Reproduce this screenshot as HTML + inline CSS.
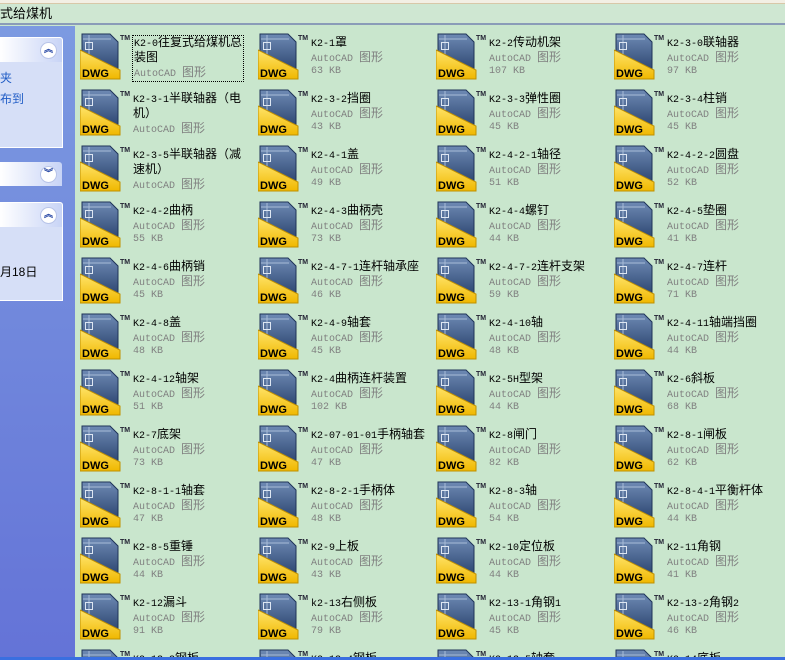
<!DOCTYPE html>
<html><head><meta charset="utf-8"><style>
*{margin:0;padding:0;box-sizing:border-box}
html,body{width:785px;height:660px;overflow:hidden}
body{background:#c9e6cd;position:relative;font-family:"Liberation Mono",monospace;font-size:10px}
#top0{position:absolute;left:0;top:0;width:785px;height:4px;background:#f3efe4;border-bottom:1px solid #d8c8a8}
#addr{position:absolute;left:0;top:4px;width:785px;height:21px;background:#cfe7d2;border-bottom:2px solid #8a9cb8;font-family:"Liberation Sans","Noto Sans CJK SC",sans-serif;font-size:13px;line-height:19px}
#left{position:absolute;left:0;top:26px;width:75px;height:634px;background:linear-gradient(#7c9ae1,#6473d7)}
.pn{position:absolute;left:0;width:63px;background:#d6dff7;border:1px solid #fff;border-left:none;border-radius:0 3px 0 0}
.ph{position:absolute;left:0;top:0;width:62px;height:24px;background:linear-gradient(90deg,#fff,#c8d4f6);border-radius:0 3px 0 0}
.cb{position:absolute;left:40px;top:4px;width:17px;height:17px;border-radius:50%;background:#fff;border:1px solid #b8c4e8;color:#1e3fa0;font-size:9px;line-height:15px;text-align:center;font-family:"DejaVu Sans",sans-serif;font-weight:bold}
#bot{position:absolute;left:0;top:657px;width:785px;height:3px;background:#3a6fe0;z-index:5}
.it{position:absolute;width:178px;height:50px}
.it svg{position:absolute;left:0;top:0}
.tx{position:absolute;left:53px;top:3px;line-height:12px;white-space:nowrap;color:#000;font-size:10px}
.tx i{font-style:normal;font-size:12px;font-family:"Noto Sans CJK SC","WenQuanYi Zen Hei",sans-serif;line-height:12px}
.g{color:#808080}
.foc{outline:1px dotted #000}
</style></head><body>
<div id="top0"></div>
<div id="addr">式给煤机</div>
<div id="left">
<div class="pn" style="top:11px;height:111px"><div class="ph"><div class="cb">︽</div></div>
<div style="position:absolute;left:0;top:30px;color:#215dc6;font-family:'Liberation Sans','Noto Sans CJK SC',sans-serif;font-size:12px;line-height:21px">夹<br>布到</div></div>
<div class="pn" style="top:136px;height:23px;background:none;border:none"><div class="ph"><div class="cb">︾</div></div></div>
<div class="pn" style="top:176px;height:99px"><div class="ph"><div class="cb">︽</div></div>
<div style="position:absolute;left:0;top:60px;color:#000;font-family:'Liberation Sans','Noto Sans CJK SC',sans-serif;font-size:12px">月18日</div></div>
</div>
<svg width="0" height="0" style="position:absolute"><defs>
<linearGradient id="bg" x1="0" y1="0" x2="0" y2="1"><stop offset="0" stop-color="#6e8ab4"/><stop offset="1" stop-color="#263f6a"/></linearGradient>
<linearGradient id="yg" x1="0" y1="0" x2="0" y2="1"><stop offset="0" stop-color="#ffe46a"/><stop offset="1" stop-color="#f0b800"/></linearGradient>
</defs></svg>

<div class="it" style="left:80px;top:33px"><svg width="50" height="48"><path d="M2 1H30L38 9V41H2Z" fill="url(#bg)" stroke="#1e3358"/><path d="M3 6H31M9 2V22" stroke="#a8bcd8"/><rect x="5.5" y="9.5" width="7" height="7" fill="none" stroke="#dde6f2"/><path d="M0 17L40 37V46H0Z" fill="url(#yg)" stroke="#c09000"/><text x="2" y="44" font-family="Liberation Sans" font-weight="bold" font-size="11">DWG</text><text x="40" y="7" font-family="Liberation Sans" font-weight="bold" font-size="7" fill="#223">TM</text></svg><div class="tx"><span class="foc" style="display:inline-block;padding:0 1px">K2-0<i>往复式给煤机总</i><br><i>装图</i><br><span class="g">AutoCAD <i>图形</i></span></span></div></div>
<div class="it" style="left:258px;top:33px"><svg width="50" height="48"><path d="M2 1H30L38 9V41H2Z" fill="url(#bg)" stroke="#1e3358"/><path d="M3 6H31M9 2V22" stroke="#a8bcd8"/><rect x="5.5" y="9.5" width="7" height="7" fill="none" stroke="#dde6f2"/><path d="M0 17L40 37V46H0Z" fill="url(#yg)" stroke="#c09000"/><text x="2" y="44" font-family="Liberation Sans" font-weight="bold" font-size="11">DWG</text><text x="40" y="7" font-family="Liberation Sans" font-weight="bold" font-size="7" fill="#223">TM</text></svg><div class="tx">K2-1<i>罩</i><br><span class="g">AutoCAD <i>图形</i><br>63 KB</span></div></div>
<div class="it" style="left:436px;top:33px"><svg width="50" height="48"><path d="M2 1H30L38 9V41H2Z" fill="url(#bg)" stroke="#1e3358"/><path d="M3 6H31M9 2V22" stroke="#a8bcd8"/><rect x="5.5" y="9.5" width="7" height="7" fill="none" stroke="#dde6f2"/><path d="M0 17L40 37V46H0Z" fill="url(#yg)" stroke="#c09000"/><text x="2" y="44" font-family="Liberation Sans" font-weight="bold" font-size="11">DWG</text><text x="40" y="7" font-family="Liberation Sans" font-weight="bold" font-size="7" fill="#223">TM</text></svg><div class="tx">K2-2<i>传动机架</i><br><span class="g">AutoCAD <i>图形</i><br>107 KB</span></div></div>
<div class="it" style="left:614px;top:33px"><svg width="50" height="48"><path d="M2 1H30L38 9V41H2Z" fill="url(#bg)" stroke="#1e3358"/><path d="M3 6H31M9 2V22" stroke="#a8bcd8"/><rect x="5.5" y="9.5" width="7" height="7" fill="none" stroke="#dde6f2"/><path d="M0 17L40 37V46H0Z" fill="url(#yg)" stroke="#c09000"/><text x="2" y="44" font-family="Liberation Sans" font-weight="bold" font-size="11">DWG</text><text x="40" y="7" font-family="Liberation Sans" font-weight="bold" font-size="7" fill="#223">TM</text></svg><div class="tx">K2-3-0<i>联轴器</i><br><span class="g">AutoCAD <i>图形</i><br>97 KB</span></div></div>

<div class="it" style="left:80px;top:89px"><svg width="50" height="48"><path d="M2 1H30L38 9V41H2Z" fill="url(#bg)" stroke="#1e3358"/><path d="M3 6H31M9 2V22" stroke="#a8bcd8"/><rect x="5.5" y="9.5" width="7" height="7" fill="none" stroke="#dde6f2"/><path d="M0 17L40 37V46H0Z" fill="url(#yg)" stroke="#c09000"/><text x="2" y="44" font-family="Liberation Sans" font-weight="bold" font-size="11">DWG</text><text x="40" y="7" font-family="Liberation Sans" font-weight="bold" font-size="7" fill="#223">TM</text></svg><div class="tx">K2-3-1<i>半联轴器（电</i><br><i>机）</i><br><span class="g">AutoCAD <i>图形</i></span></div></div>
<div class="it" style="left:258px;top:89px"><svg width="50" height="48"><path d="M2 1H30L38 9V41H2Z" fill="url(#bg)" stroke="#1e3358"/><path d="M3 6H31M9 2V22" stroke="#a8bcd8"/><rect x="5.5" y="9.5" width="7" height="7" fill="none" stroke="#dde6f2"/><path d="M0 17L40 37V46H0Z" fill="url(#yg)" stroke="#c09000"/><text x="2" y="44" font-family="Liberation Sans" font-weight="bold" font-size="11">DWG</text><text x="40" y="7" font-family="Liberation Sans" font-weight="bold" font-size="7" fill="#223">TM</text></svg><div class="tx">K2-3-2<i>挡圈</i><br><span class="g">AutoCAD <i>图形</i><br>43 KB</span></div></div>
<div class="it" style="left:436px;top:89px"><svg width="50" height="48"><path d="M2 1H30L38 9V41H2Z" fill="url(#bg)" stroke="#1e3358"/><path d="M3 6H31M9 2V22" stroke="#a8bcd8"/><rect x="5.5" y="9.5" width="7" height="7" fill="none" stroke="#dde6f2"/><path d="M0 17L40 37V46H0Z" fill="url(#yg)" stroke="#c09000"/><text x="2" y="44" font-family="Liberation Sans" font-weight="bold" font-size="11">DWG</text><text x="40" y="7" font-family="Liberation Sans" font-weight="bold" font-size="7" fill="#223">TM</text></svg><div class="tx">K2-3-3<i>弹性圈</i><br><span class="g">AutoCAD <i>图形</i><br>45 KB</span></div></div>
<div class="it" style="left:614px;top:89px"><svg width="50" height="48"><path d="M2 1H30L38 9V41H2Z" fill="url(#bg)" stroke="#1e3358"/><path d="M3 6H31M9 2V22" stroke="#a8bcd8"/><rect x="5.5" y="9.5" width="7" height="7" fill="none" stroke="#dde6f2"/><path d="M0 17L40 37V46H0Z" fill="url(#yg)" stroke="#c09000"/><text x="2" y="44" font-family="Liberation Sans" font-weight="bold" font-size="11">DWG</text><text x="40" y="7" font-family="Liberation Sans" font-weight="bold" font-size="7" fill="#223">TM</text></svg><div class="tx">K2-3-4<i>柱销</i><br><span class="g">AutoCAD <i>图形</i><br>45 KB</span></div></div>

<div class="it" style="left:80px;top:145px"><svg width="50" height="48"><path d="M2 1H30L38 9V41H2Z" fill="url(#bg)" stroke="#1e3358"/><path d="M3 6H31M9 2V22" stroke="#a8bcd8"/><rect x="5.5" y="9.5" width="7" height="7" fill="none" stroke="#dde6f2"/><path d="M0 17L40 37V46H0Z" fill="url(#yg)" stroke="#c09000"/><text x="2" y="44" font-family="Liberation Sans" font-weight="bold" font-size="11">DWG</text><text x="40" y="7" font-family="Liberation Sans" font-weight="bold" font-size="7" fill="#223">TM</text></svg><div class="tx">K2-3-5<i>半联轴器（减</i><br><i>速机）</i><br><span class="g">AutoCAD <i>图形</i></span></div></div>
<div class="it" style="left:258px;top:145px"><svg width="50" height="48"><path d="M2 1H30L38 9V41H2Z" fill="url(#bg)" stroke="#1e3358"/><path d="M3 6H31M9 2V22" stroke="#a8bcd8"/><rect x="5.5" y="9.5" width="7" height="7" fill="none" stroke="#dde6f2"/><path d="M0 17L40 37V46H0Z" fill="url(#yg)" stroke="#c09000"/><text x="2" y="44" font-family="Liberation Sans" font-weight="bold" font-size="11">DWG</text><text x="40" y="7" font-family="Liberation Sans" font-weight="bold" font-size="7" fill="#223">TM</text></svg><div class="tx">K2-4-1<i>盖</i><br><span class="g">AutoCAD <i>图形</i><br>49 KB</span></div></div>
<div class="it" style="left:436px;top:145px"><svg width="50" height="48"><path d="M2 1H30L38 9V41H2Z" fill="url(#bg)" stroke="#1e3358"/><path d="M3 6H31M9 2V22" stroke="#a8bcd8"/><rect x="5.5" y="9.5" width="7" height="7" fill="none" stroke="#dde6f2"/><path d="M0 17L40 37V46H0Z" fill="url(#yg)" stroke="#c09000"/><text x="2" y="44" font-family="Liberation Sans" font-weight="bold" font-size="11">DWG</text><text x="40" y="7" font-family="Liberation Sans" font-weight="bold" font-size="7" fill="#223">TM</text></svg><div class="tx">K2-4-2-1<i>轴径</i><br><span class="g">AutoCAD <i>图形</i><br>51 KB</span></div></div>
<div class="it" style="left:614px;top:145px"><svg width="50" height="48"><path d="M2 1H30L38 9V41H2Z" fill="url(#bg)" stroke="#1e3358"/><path d="M3 6H31M9 2V22" stroke="#a8bcd8"/><rect x="5.5" y="9.5" width="7" height="7" fill="none" stroke="#dde6f2"/><path d="M0 17L40 37V46H0Z" fill="url(#yg)" stroke="#c09000"/><text x="2" y="44" font-family="Liberation Sans" font-weight="bold" font-size="11">DWG</text><text x="40" y="7" font-family="Liberation Sans" font-weight="bold" font-size="7" fill="#223">TM</text></svg><div class="tx">K2-4-2-2<i>圆盘</i><br><span class="g">AutoCAD <i>图形</i><br>52 KB</span></div></div>

<div class="it" style="left:80px;top:201px"><svg width="50" height="48"><path d="M2 1H30L38 9V41H2Z" fill="url(#bg)" stroke="#1e3358"/><path d="M3 6H31M9 2V22" stroke="#a8bcd8"/><rect x="5.5" y="9.5" width="7" height="7" fill="none" stroke="#dde6f2"/><path d="M0 17L40 37V46H0Z" fill="url(#yg)" stroke="#c09000"/><text x="2" y="44" font-family="Liberation Sans" font-weight="bold" font-size="11">DWG</text><text x="40" y="7" font-family="Liberation Sans" font-weight="bold" font-size="7" fill="#223">TM</text></svg><div class="tx">K2-4-2<i>曲柄</i><br><span class="g">AutoCAD <i>图形</i><br>55 KB</span></div></div>
<div class="it" style="left:258px;top:201px"><svg width="50" height="48"><path d="M2 1H30L38 9V41H2Z" fill="url(#bg)" stroke="#1e3358"/><path d="M3 6H31M9 2V22" stroke="#a8bcd8"/><rect x="5.5" y="9.5" width="7" height="7" fill="none" stroke="#dde6f2"/><path d="M0 17L40 37V46H0Z" fill="url(#yg)" stroke="#c09000"/><text x="2" y="44" font-family="Liberation Sans" font-weight="bold" font-size="11">DWG</text><text x="40" y="7" font-family="Liberation Sans" font-weight="bold" font-size="7" fill="#223">TM</text></svg><div class="tx">K2-4-3<i>曲柄壳</i><br><span class="g">AutoCAD <i>图形</i><br>73 KB</span></div></div>
<div class="it" style="left:436px;top:201px"><svg width="50" height="48"><path d="M2 1H30L38 9V41H2Z" fill="url(#bg)" stroke="#1e3358"/><path d="M3 6H31M9 2V22" stroke="#a8bcd8"/><rect x="5.5" y="9.5" width="7" height="7" fill="none" stroke="#dde6f2"/><path d="M0 17L40 37V46H0Z" fill="url(#yg)" stroke="#c09000"/><text x="2" y="44" font-family="Liberation Sans" font-weight="bold" font-size="11">DWG</text><text x="40" y="7" font-family="Liberation Sans" font-weight="bold" font-size="7" fill="#223">TM</text></svg><div class="tx">K2-4-4<i>螺钉</i><br><span class="g">AutoCAD <i>图形</i><br>44 KB</span></div></div>
<div class="it" style="left:614px;top:201px"><svg width="50" height="48"><path d="M2 1H30L38 9V41H2Z" fill="url(#bg)" stroke="#1e3358"/><path d="M3 6H31M9 2V22" stroke="#a8bcd8"/><rect x="5.5" y="9.5" width="7" height="7" fill="none" stroke="#dde6f2"/><path d="M0 17L40 37V46H0Z" fill="url(#yg)" stroke="#c09000"/><text x="2" y="44" font-family="Liberation Sans" font-weight="bold" font-size="11">DWG</text><text x="40" y="7" font-family="Liberation Sans" font-weight="bold" font-size="7" fill="#223">TM</text></svg><div class="tx">K2-4-5<i>垫圈</i><br><span class="g">AutoCAD <i>图形</i><br>41 KB</span></div></div>

<div class="it" style="left:80px;top:257px"><svg width="50" height="48"><path d="M2 1H30L38 9V41H2Z" fill="url(#bg)" stroke="#1e3358"/><path d="M3 6H31M9 2V22" stroke="#a8bcd8"/><rect x="5.5" y="9.5" width="7" height="7" fill="none" stroke="#dde6f2"/><path d="M0 17L40 37V46H0Z" fill="url(#yg)" stroke="#c09000"/><text x="2" y="44" font-family="Liberation Sans" font-weight="bold" font-size="11">DWG</text><text x="40" y="7" font-family="Liberation Sans" font-weight="bold" font-size="7" fill="#223">TM</text></svg><div class="tx">K2-4-6<i>曲柄销</i><br><span class="g">AutoCAD <i>图形</i><br>45 KB</span></div></div>
<div class="it" style="left:258px;top:257px"><svg width="50" height="48"><path d="M2 1H30L38 9V41H2Z" fill="url(#bg)" stroke="#1e3358"/><path d="M3 6H31M9 2V22" stroke="#a8bcd8"/><rect x="5.5" y="9.5" width="7" height="7" fill="none" stroke="#dde6f2"/><path d="M0 17L40 37V46H0Z" fill="url(#yg)" stroke="#c09000"/><text x="2" y="44" font-family="Liberation Sans" font-weight="bold" font-size="11">DWG</text><text x="40" y="7" font-family="Liberation Sans" font-weight="bold" font-size="7" fill="#223">TM</text></svg><div class="tx">K2-4-7-1<i>连杆轴承座</i><br><span class="g">AutoCAD <i>图形</i><br>46 KB</span></div></div>
<div class="it" style="left:436px;top:257px"><svg width="50" height="48"><path d="M2 1H30L38 9V41H2Z" fill="url(#bg)" stroke="#1e3358"/><path d="M3 6H31M9 2V22" stroke="#a8bcd8"/><rect x="5.5" y="9.5" width="7" height="7" fill="none" stroke="#dde6f2"/><path d="M0 17L40 37V46H0Z" fill="url(#yg)" stroke="#c09000"/><text x="2" y="44" font-family="Liberation Sans" font-weight="bold" font-size="11">DWG</text><text x="40" y="7" font-family="Liberation Sans" font-weight="bold" font-size="7" fill="#223">TM</text></svg><div class="tx">K2-4-7-2<i>连杆支架</i><br><span class="g">AutoCAD <i>图形</i><br>59 KB</span></div></div>
<div class="it" style="left:614px;top:257px"><svg width="50" height="48"><path d="M2 1H30L38 9V41H2Z" fill="url(#bg)" stroke="#1e3358"/><path d="M3 6H31M9 2V22" stroke="#a8bcd8"/><rect x="5.5" y="9.5" width="7" height="7" fill="none" stroke="#dde6f2"/><path d="M0 17L40 37V46H0Z" fill="url(#yg)" stroke="#c09000"/><text x="2" y="44" font-family="Liberation Sans" font-weight="bold" font-size="11">DWG</text><text x="40" y="7" font-family="Liberation Sans" font-weight="bold" font-size="7" fill="#223">TM</text></svg><div class="tx">K2-4-7<i>连杆</i><br><span class="g">AutoCAD <i>图形</i><br>71 KB</span></div></div>

<div class="it" style="left:80px;top:313px"><svg width="50" height="48"><path d="M2 1H30L38 9V41H2Z" fill="url(#bg)" stroke="#1e3358"/><path d="M3 6H31M9 2V22" stroke="#a8bcd8"/><rect x="5.5" y="9.5" width="7" height="7" fill="none" stroke="#dde6f2"/><path d="M0 17L40 37V46H0Z" fill="url(#yg)" stroke="#c09000"/><text x="2" y="44" font-family="Liberation Sans" font-weight="bold" font-size="11">DWG</text><text x="40" y="7" font-family="Liberation Sans" font-weight="bold" font-size="7" fill="#223">TM</text></svg><div class="tx">K2-4-8<i>盖</i><br><span class="g">AutoCAD <i>图形</i><br>48 KB</span></div></div>
<div class="it" style="left:258px;top:313px"><svg width="50" height="48"><path d="M2 1H30L38 9V41H2Z" fill="url(#bg)" stroke="#1e3358"/><path d="M3 6H31M9 2V22" stroke="#a8bcd8"/><rect x="5.5" y="9.5" width="7" height="7" fill="none" stroke="#dde6f2"/><path d="M0 17L40 37V46H0Z" fill="url(#yg)" stroke="#c09000"/><text x="2" y="44" font-family="Liberation Sans" font-weight="bold" font-size="11">DWG</text><text x="40" y="7" font-family="Liberation Sans" font-weight="bold" font-size="7" fill="#223">TM</text></svg><div class="tx">K2-4-9<i>轴套</i><br><span class="g">AutoCAD <i>图形</i><br>45 KB</span></div></div>
<div class="it" style="left:436px;top:313px"><svg width="50" height="48"><path d="M2 1H30L38 9V41H2Z" fill="url(#bg)" stroke="#1e3358"/><path d="M3 6H31M9 2V22" stroke="#a8bcd8"/><rect x="5.5" y="9.5" width="7" height="7" fill="none" stroke="#dde6f2"/><path d="M0 17L40 37V46H0Z" fill="url(#yg)" stroke="#c09000"/><text x="2" y="44" font-family="Liberation Sans" font-weight="bold" font-size="11">DWG</text><text x="40" y="7" font-family="Liberation Sans" font-weight="bold" font-size="7" fill="#223">TM</text></svg><div class="tx">K2-4-10<i>轴</i><br><span class="g">AutoCAD <i>图形</i><br>48 KB</span></div></div>
<div class="it" style="left:614px;top:313px"><svg width="50" height="48"><path d="M2 1H30L38 9V41H2Z" fill="url(#bg)" stroke="#1e3358"/><path d="M3 6H31M9 2V22" stroke="#a8bcd8"/><rect x="5.5" y="9.5" width="7" height="7" fill="none" stroke="#dde6f2"/><path d="M0 17L40 37V46H0Z" fill="url(#yg)" stroke="#c09000"/><text x="2" y="44" font-family="Liberation Sans" font-weight="bold" font-size="11">DWG</text><text x="40" y="7" font-family="Liberation Sans" font-weight="bold" font-size="7" fill="#223">TM</text></svg><div class="tx">K2-4-11<i>轴端挡圈</i><br><span class="g">AutoCAD <i>图形</i><br>44 KB</span></div></div>

<div class="it" style="left:80px;top:369px"><svg width="50" height="48"><path d="M2 1H30L38 9V41H2Z" fill="url(#bg)" stroke="#1e3358"/><path d="M3 6H31M9 2V22" stroke="#a8bcd8"/><rect x="5.5" y="9.5" width="7" height="7" fill="none" stroke="#dde6f2"/><path d="M0 17L40 37V46H0Z" fill="url(#yg)" stroke="#c09000"/><text x="2" y="44" font-family="Liberation Sans" font-weight="bold" font-size="11">DWG</text><text x="40" y="7" font-family="Liberation Sans" font-weight="bold" font-size="7" fill="#223">TM</text></svg><div class="tx">K2-4-12<i>轴架</i><br><span class="g">AutoCAD <i>图形</i><br>51 KB</span></div></div>
<div class="it" style="left:258px;top:369px"><svg width="50" height="48"><path d="M2 1H30L38 9V41H2Z" fill="url(#bg)" stroke="#1e3358"/><path d="M3 6H31M9 2V22" stroke="#a8bcd8"/><rect x="5.5" y="9.5" width="7" height="7" fill="none" stroke="#dde6f2"/><path d="M0 17L40 37V46H0Z" fill="url(#yg)" stroke="#c09000"/><text x="2" y="44" font-family="Liberation Sans" font-weight="bold" font-size="11">DWG</text><text x="40" y="7" font-family="Liberation Sans" font-weight="bold" font-size="7" fill="#223">TM</text></svg><div class="tx">K2-4<i>曲柄连杆装置</i><br><span class="g">AutoCAD <i>图形</i><br>102 KB</span></div></div>
<div class="it" style="left:436px;top:369px"><svg width="50" height="48"><path d="M2 1H30L38 9V41H2Z" fill="url(#bg)" stroke="#1e3358"/><path d="M3 6H31M9 2V22" stroke="#a8bcd8"/><rect x="5.5" y="9.5" width="7" height="7" fill="none" stroke="#dde6f2"/><path d="M0 17L40 37V46H0Z" fill="url(#yg)" stroke="#c09000"/><text x="2" y="44" font-family="Liberation Sans" font-weight="bold" font-size="11">DWG</text><text x="40" y="7" font-family="Liberation Sans" font-weight="bold" font-size="7" fill="#223">TM</text></svg><div class="tx">K2-5H<i>型架</i><br><span class="g">AutoCAD <i>图形</i><br>44 KB</span></div></div>
<div class="it" style="left:614px;top:369px"><svg width="50" height="48"><path d="M2 1H30L38 9V41H2Z" fill="url(#bg)" stroke="#1e3358"/><path d="M3 6H31M9 2V22" stroke="#a8bcd8"/><rect x="5.5" y="9.5" width="7" height="7" fill="none" stroke="#dde6f2"/><path d="M0 17L40 37V46H0Z" fill="url(#yg)" stroke="#c09000"/><text x="2" y="44" font-family="Liberation Sans" font-weight="bold" font-size="11">DWG</text><text x="40" y="7" font-family="Liberation Sans" font-weight="bold" font-size="7" fill="#223">TM</text></svg><div class="tx">K2-6<i>斜板</i><br><span class="g">AutoCAD <i>图形</i><br>68 KB</span></div></div>

<div class="it" style="left:80px;top:425px"><svg width="50" height="48"><path d="M2 1H30L38 9V41H2Z" fill="url(#bg)" stroke="#1e3358"/><path d="M3 6H31M9 2V22" stroke="#a8bcd8"/><rect x="5.5" y="9.5" width="7" height="7" fill="none" stroke="#dde6f2"/><path d="M0 17L40 37V46H0Z" fill="url(#yg)" stroke="#c09000"/><text x="2" y="44" font-family="Liberation Sans" font-weight="bold" font-size="11">DWG</text><text x="40" y="7" font-family="Liberation Sans" font-weight="bold" font-size="7" fill="#223">TM</text></svg><div class="tx">K2-7<i>底架</i><br><span class="g">AutoCAD <i>图形</i><br>73 KB</span></div></div>
<div class="it" style="left:258px;top:425px"><svg width="50" height="48"><path d="M2 1H30L38 9V41H2Z" fill="url(#bg)" stroke="#1e3358"/><path d="M3 6H31M9 2V22" stroke="#a8bcd8"/><rect x="5.5" y="9.5" width="7" height="7" fill="none" stroke="#dde6f2"/><path d="M0 17L40 37V46H0Z" fill="url(#yg)" stroke="#c09000"/><text x="2" y="44" font-family="Liberation Sans" font-weight="bold" font-size="11">DWG</text><text x="40" y="7" font-family="Liberation Sans" font-weight="bold" font-size="7" fill="#223">TM</text></svg><div class="tx">K2-07-01-01<i>手柄轴套</i><br><span class="g">AutoCAD <i>图形</i><br>47 KB</span></div></div>
<div class="it" style="left:436px;top:425px"><svg width="50" height="48"><path d="M2 1H30L38 9V41H2Z" fill="url(#bg)" stroke="#1e3358"/><path d="M3 6H31M9 2V22" stroke="#a8bcd8"/><rect x="5.5" y="9.5" width="7" height="7" fill="none" stroke="#dde6f2"/><path d="M0 17L40 37V46H0Z" fill="url(#yg)" stroke="#c09000"/><text x="2" y="44" font-family="Liberation Sans" font-weight="bold" font-size="11">DWG</text><text x="40" y="7" font-family="Liberation Sans" font-weight="bold" font-size="7" fill="#223">TM</text></svg><div class="tx">K2-8<i>闸门</i><br><span class="g">AutoCAD <i>图形</i><br>82 KB</span></div></div>
<div class="it" style="left:614px;top:425px"><svg width="50" height="48"><path d="M2 1H30L38 9V41H2Z" fill="url(#bg)" stroke="#1e3358"/><path d="M3 6H31M9 2V22" stroke="#a8bcd8"/><rect x="5.5" y="9.5" width="7" height="7" fill="none" stroke="#dde6f2"/><path d="M0 17L40 37V46H0Z" fill="url(#yg)" stroke="#c09000"/><text x="2" y="44" font-family="Liberation Sans" font-weight="bold" font-size="11">DWG</text><text x="40" y="7" font-family="Liberation Sans" font-weight="bold" font-size="7" fill="#223">TM</text></svg><div class="tx">K2-8-1<i>闸板</i><br><span class="g">AutoCAD <i>图形</i><br>62 KB</span></div></div>

<div class="it" style="left:80px;top:481px"><svg width="50" height="48"><path d="M2 1H30L38 9V41H2Z" fill="url(#bg)" stroke="#1e3358"/><path d="M3 6H31M9 2V22" stroke="#a8bcd8"/><rect x="5.5" y="9.5" width="7" height="7" fill="none" stroke="#dde6f2"/><path d="M0 17L40 37V46H0Z" fill="url(#yg)" stroke="#c09000"/><text x="2" y="44" font-family="Liberation Sans" font-weight="bold" font-size="11">DWG</text><text x="40" y="7" font-family="Liberation Sans" font-weight="bold" font-size="7" fill="#223">TM</text></svg><div class="tx">K2-8-1-1<i>轴套</i><br><span class="g">AutoCAD <i>图形</i><br>47 KB</span></div></div>
<div class="it" style="left:258px;top:481px"><svg width="50" height="48"><path d="M2 1H30L38 9V41H2Z" fill="url(#bg)" stroke="#1e3358"/><path d="M3 6H31M9 2V22" stroke="#a8bcd8"/><rect x="5.5" y="9.5" width="7" height="7" fill="none" stroke="#dde6f2"/><path d="M0 17L40 37V46H0Z" fill="url(#yg)" stroke="#c09000"/><text x="2" y="44" font-family="Liberation Sans" font-weight="bold" font-size="11">DWG</text><text x="40" y="7" font-family="Liberation Sans" font-weight="bold" font-size="7" fill="#223">TM</text></svg><div class="tx">K2-8-2-1<i>手柄体</i><br><span class="g">AutoCAD <i>图形</i><br>48 KB</span></div></div>
<div class="it" style="left:436px;top:481px"><svg width="50" height="48"><path d="M2 1H30L38 9V41H2Z" fill="url(#bg)" stroke="#1e3358"/><path d="M3 6H31M9 2V22" stroke="#a8bcd8"/><rect x="5.5" y="9.5" width="7" height="7" fill="none" stroke="#dde6f2"/><path d="M0 17L40 37V46H0Z" fill="url(#yg)" stroke="#c09000"/><text x="2" y="44" font-family="Liberation Sans" font-weight="bold" font-size="11">DWG</text><text x="40" y="7" font-family="Liberation Sans" font-weight="bold" font-size="7" fill="#223">TM</text></svg><div class="tx">K2-8-3<i>轴</i><br><span class="g">AutoCAD <i>图形</i><br>54 KB</span></div></div>
<div class="it" style="left:614px;top:481px"><svg width="50" height="48"><path d="M2 1H30L38 9V41H2Z" fill="url(#bg)" stroke="#1e3358"/><path d="M3 6H31M9 2V22" stroke="#a8bcd8"/><rect x="5.5" y="9.5" width="7" height="7" fill="none" stroke="#dde6f2"/><path d="M0 17L40 37V46H0Z" fill="url(#yg)" stroke="#c09000"/><text x="2" y="44" font-family="Liberation Sans" font-weight="bold" font-size="11">DWG</text><text x="40" y="7" font-family="Liberation Sans" font-weight="bold" font-size="7" fill="#223">TM</text></svg><div class="tx">K2-8-4-1<i>平衡杆体</i><br><span class="g">AutoCAD <i>图形</i><br>44 KB</span></div></div>

<div class="it" style="left:80px;top:537px"><svg width="50" height="48"><path d="M2 1H30L38 9V41H2Z" fill="url(#bg)" stroke="#1e3358"/><path d="M3 6H31M9 2V22" stroke="#a8bcd8"/><rect x="5.5" y="9.5" width="7" height="7" fill="none" stroke="#dde6f2"/><path d="M0 17L40 37V46H0Z" fill="url(#yg)" stroke="#c09000"/><text x="2" y="44" font-family="Liberation Sans" font-weight="bold" font-size="11">DWG</text><text x="40" y="7" font-family="Liberation Sans" font-weight="bold" font-size="7" fill="#223">TM</text></svg><div class="tx">K2-8-5<i>重锤</i><br><span class="g">AutoCAD <i>图形</i><br>44 KB</span></div></div>
<div class="it" style="left:258px;top:537px"><svg width="50" height="48"><path d="M2 1H30L38 9V41H2Z" fill="url(#bg)" stroke="#1e3358"/><path d="M3 6H31M9 2V22" stroke="#a8bcd8"/><rect x="5.5" y="9.5" width="7" height="7" fill="none" stroke="#dde6f2"/><path d="M0 17L40 37V46H0Z" fill="url(#yg)" stroke="#c09000"/><text x="2" y="44" font-family="Liberation Sans" font-weight="bold" font-size="11">DWG</text><text x="40" y="7" font-family="Liberation Sans" font-weight="bold" font-size="7" fill="#223">TM</text></svg><div class="tx">K2-9<i>上板</i><br><span class="g">AutoCAD <i>图形</i><br>43 KB</span></div></div>
<div class="it" style="left:436px;top:537px"><svg width="50" height="48"><path d="M2 1H30L38 9V41H2Z" fill="url(#bg)" stroke="#1e3358"/><path d="M3 6H31M9 2V22" stroke="#a8bcd8"/><rect x="5.5" y="9.5" width="7" height="7" fill="none" stroke="#dde6f2"/><path d="M0 17L40 37V46H0Z" fill="url(#yg)" stroke="#c09000"/><text x="2" y="44" font-family="Liberation Sans" font-weight="bold" font-size="11">DWG</text><text x="40" y="7" font-family="Liberation Sans" font-weight="bold" font-size="7" fill="#223">TM</text></svg><div class="tx">K2-10<i>定位板</i><br><span class="g">AutoCAD <i>图形</i><br>44 KB</span></div></div>
<div class="it" style="left:614px;top:537px"><svg width="50" height="48"><path d="M2 1H30L38 9V41H2Z" fill="url(#bg)" stroke="#1e3358"/><path d="M3 6H31M9 2V22" stroke="#a8bcd8"/><rect x="5.5" y="9.5" width="7" height="7" fill="none" stroke="#dde6f2"/><path d="M0 17L40 37V46H0Z" fill="url(#yg)" stroke="#c09000"/><text x="2" y="44" font-family="Liberation Sans" font-weight="bold" font-size="11">DWG</text><text x="40" y="7" font-family="Liberation Sans" font-weight="bold" font-size="7" fill="#223">TM</text></svg><div class="tx">K2-11<i>角钢</i><br><span class="g">AutoCAD <i>图形</i><br>41 KB</span></div></div>

<div class="it" style="left:80px;top:593px"><svg width="50" height="48"><path d="M2 1H30L38 9V41H2Z" fill="url(#bg)" stroke="#1e3358"/><path d="M3 6H31M9 2V22" stroke="#a8bcd8"/><rect x="5.5" y="9.5" width="7" height="7" fill="none" stroke="#dde6f2"/><path d="M0 17L40 37V46H0Z" fill="url(#yg)" stroke="#c09000"/><text x="2" y="44" font-family="Liberation Sans" font-weight="bold" font-size="11">DWG</text><text x="40" y="7" font-family="Liberation Sans" font-weight="bold" font-size="7" fill="#223">TM</text></svg><div class="tx">K2-12<i>漏斗</i><br><span class="g">AutoCAD <i>图形</i><br>91 KB</span></div></div>
<div class="it" style="left:258px;top:593px"><svg width="50" height="48"><path d="M2 1H30L38 9V41H2Z" fill="url(#bg)" stroke="#1e3358"/><path d="M3 6H31M9 2V22" stroke="#a8bcd8"/><rect x="5.5" y="9.5" width="7" height="7" fill="none" stroke="#dde6f2"/><path d="M0 17L40 37V46H0Z" fill="url(#yg)" stroke="#c09000"/><text x="2" y="44" font-family="Liberation Sans" font-weight="bold" font-size="11">DWG</text><text x="40" y="7" font-family="Liberation Sans" font-weight="bold" font-size="7" fill="#223">TM</text></svg><div class="tx">k2-13<i>右侧板</i><br><span class="g">AutoCAD <i>图形</i><br>79 KB</span></div></div>
<div class="it" style="left:436px;top:593px"><svg width="50" height="48"><path d="M2 1H30L38 9V41H2Z" fill="url(#bg)" stroke="#1e3358"/><path d="M3 6H31M9 2V22" stroke="#a8bcd8"/><rect x="5.5" y="9.5" width="7" height="7" fill="none" stroke="#dde6f2"/><path d="M0 17L40 37V46H0Z" fill="url(#yg)" stroke="#c09000"/><text x="2" y="44" font-family="Liberation Sans" font-weight="bold" font-size="11">DWG</text><text x="40" y="7" font-family="Liberation Sans" font-weight="bold" font-size="7" fill="#223">TM</text></svg><div class="tx">K2-13-1<i>角钢</i>1<br><span class="g">AutoCAD <i>图形</i><br>45 KB</span></div></div>
<div class="it" style="left:614px;top:593px"><svg width="50" height="48"><path d="M2 1H30L38 9V41H2Z" fill="url(#bg)" stroke="#1e3358"/><path d="M3 6H31M9 2V22" stroke="#a8bcd8"/><rect x="5.5" y="9.5" width="7" height="7" fill="none" stroke="#dde6f2"/><path d="M0 17L40 37V46H0Z" fill="url(#yg)" stroke="#c09000"/><text x="2" y="44" font-family="Liberation Sans" font-weight="bold" font-size="11">DWG</text><text x="40" y="7" font-family="Liberation Sans" font-weight="bold" font-size="7" fill="#223">TM</text></svg><div class="tx">K2-13-2<i>角钢</i>2<br><span class="g">AutoCAD <i>图形</i><br>46 KB</span></div></div>

<div class="it" style="left:80px;top:649px;height:8px;overflow:hidden"><svg width="50" height="48"><path d="M2 1H30L38 9V41H2Z" fill="url(#bg)" stroke="#1e3358"/><path d="M3 6H31M9 2V22" stroke="#a8bcd8"/><text x="40" y="7" font-family="Liberation Sans" font-weight="bold" font-size="7" fill="#223">TM</text></svg><div class="tx">K2-13-3<i>钢板</i></div></div>
<div class="it" style="left:258px;top:649px;height:8px;overflow:hidden"><svg width="50" height="48"><path d="M2 1H30L38 9V41H2Z" fill="url(#bg)" stroke="#1e3358"/><path d="M3 6H31M9 2V22" stroke="#a8bcd8"/><text x="40" y="7" font-family="Liberation Sans" font-weight="bold" font-size="7" fill="#223">TM</text></svg><div class="tx">K2-13-4<i>钢板</i></div></div>
<div class="it" style="left:436px;top:649px;height:8px;overflow:hidden"><svg width="50" height="48"><path d="M2 1H30L38 9V41H2Z" fill="url(#bg)" stroke="#1e3358"/><path d="M3 6H31M9 2V22" stroke="#a8bcd8"/><text x="40" y="7" font-family="Liberation Sans" font-weight="bold" font-size="7" fill="#223">TM</text></svg><div class="tx">K2-13-5<i>轴套</i></div></div>
<div class="it" style="left:614px;top:649px;height:8px;overflow:hidden"><svg width="50" height="48"><path d="M2 1H30L38 9V41H2Z" fill="url(#bg)" stroke="#1e3358"/><path d="M3 6H31M9 2V22" stroke="#a8bcd8"/><text x="40" y="7" font-family="Liberation Sans" font-weight="bold" font-size="7" fill="#223">TM</text></svg><div class="tx">K2-14<i>底板</i></div></div>
<div id="bot"></div>
</body></html>
